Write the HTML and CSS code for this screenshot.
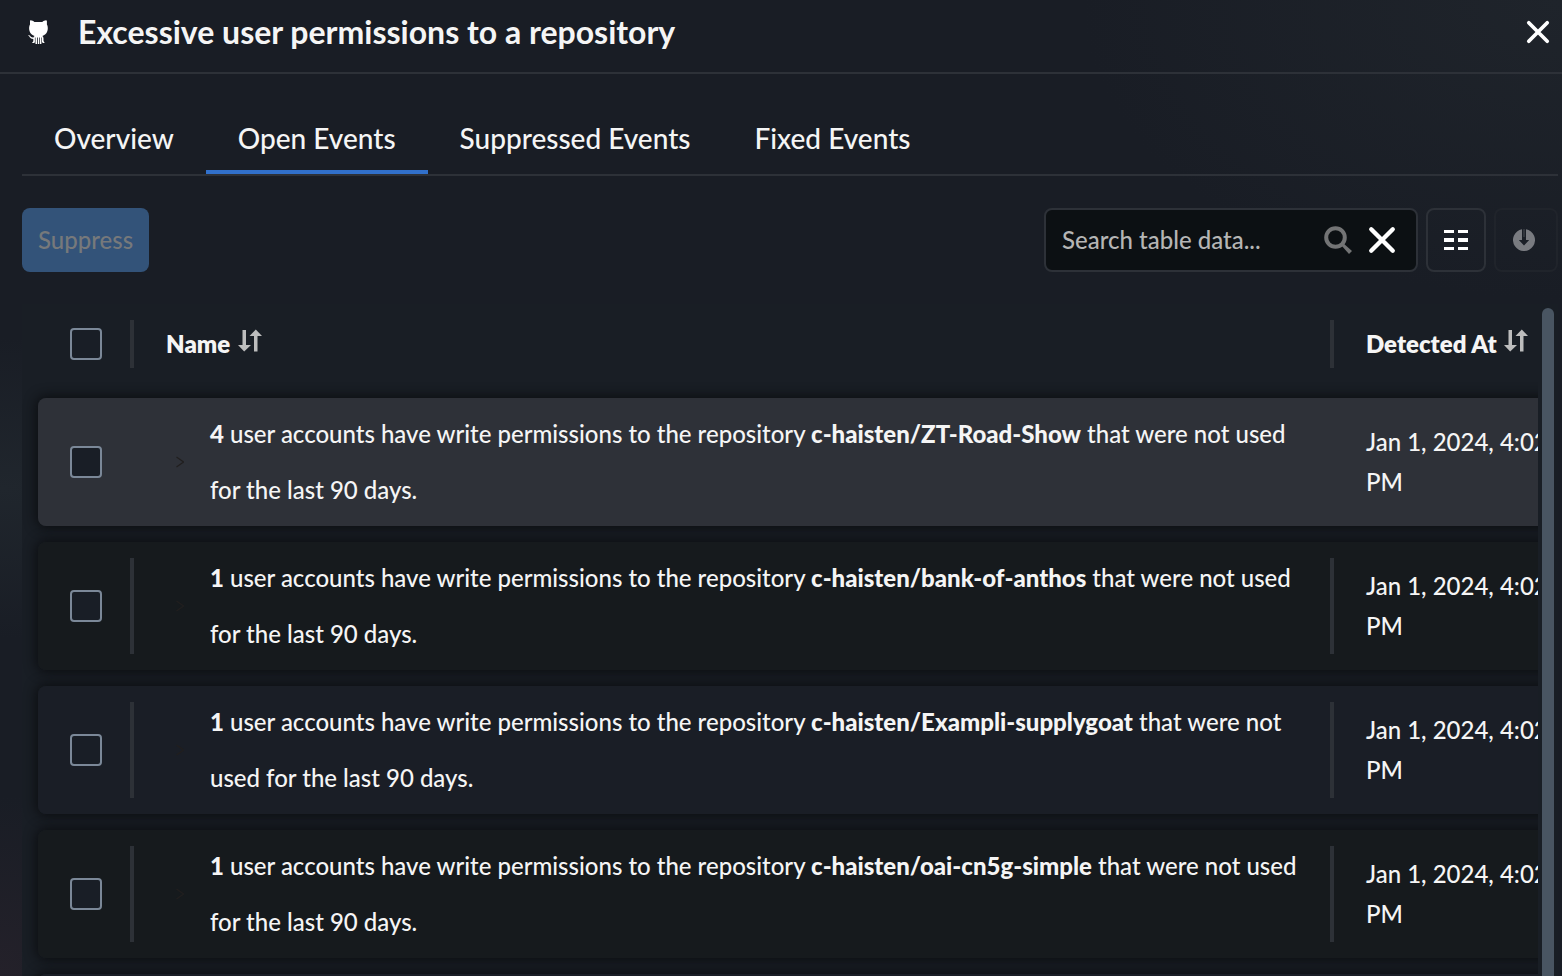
FILE: index.html
```
<!DOCTYPE html>
<html lang="en">
<head>
<meta charset="utf-8">
<title>Excessive user permissions to a repository</title>
<link rel="stylesheet" href="styles.css">
</head>
<body>
<svg class="defs" aria-hidden="true">
  <symbol id="sort" viewBox="0 0 24 24"><path d="M4.500 1h3.500v15h5L6.200 22.500 0 16h4.500zM16 22.500h3.500V7H24L17.800 .5 11.500 7H16z"/></symbol>
  <symbol id="chevron" viewBox="0 0 8 12"><path d="M.5 1l7 5-7 5" fill="none" stroke="currentColor" stroke-width="1.200"/></symbol>
  <symbol id="cross" viewBox="0 0 26 26"><path d="M3 3l20 20M23 3L3 23" fill="none" stroke="currentColor" stroke-width="4" stroke-linecap="round"/></symbol>
</svg>
<header class="header">
  <svg class="logo" viewBox="0 0 20 24" aria-hidden="true">
    <path d="M2.600.3Q2 .3 2 1v3.500C1 6 .8 9 1.600 11.300c.8 2.500 2.700 4 5 4.600-.7.500-1 1-1.100 1.600-2 .2-2.600-.5-3.300-1.400C1.600 15.200.8 14.800 0 15c1.500.8 1.500 3.800 5.300 4v2.200L4 23h2.300l.6-1V17.500h.6V24h1.500v-6.500h.8V24h1.500v-6.500h.7V24h1.400v-6.500h.6V22l.9 1h1.800l-1.200-2v-2.600c0-1-.4-2-1.200-2.500 2.300-.6 4.200-2 5-4.600.8-2.400.6-5.300-.4-6.800V1Q18.800.3 18 .3c-1.200 0-2.800.9-3.700 1.700H6.400C5.500 1.200 3.800.3 2.600.3z" fill="currentColor"/>
  </svg>
  <h1 class="title">Excessive user permissions to a repository</h1>
  <button class="icon-button close" aria-label="Close"><svg class="close-icon"><use href="#cross"/></svg></button>
</header>
<main class="content">
  <nav class="tabs">
    <a class="tab" href="#">Overview</a>
    <a class="tab selected" href="#" aria-current="page">Open Events</a>
    <a class="tab" href="#">Suppressed Events</a>
    <a class="tab" href="#">Fixed Events</a>
  </nav>
  <div class="toolbar">
    <button class="suppress" disabled>Suppress</button>
    <div class="search">
      <input class="search-input" type="text" placeholder="Search table data..." aria-label="Search table data">
      <svg class="search-icon" viewBox="0 0 28 28" aria-hidden="true"><circle cx="11.500" cy="11.500" r="9.300" fill="none" stroke="currentColor" stroke-width="4"/><path d="M19 17l9 8-3 3-8-9z" fill="currentColor"/></svg>
      <button class="icon-button" aria-label="Clear search"><svg class="clear-icon"><use href="#cross"/></svg></button>
    </div>
    <button class="tool" aria-label="Columns"><svg class="columns-icon" viewBox="0 0 24 22"><path d="M0 1h10v3H0zM14 1h10v3H14zM0 9h10v4H0zM14 9h10v4H14zM0 18h10v3H0zM14 18h10v3H14z" fill="currentColor"/></svg></button>
    <button class="tool download" aria-label="Download" disabled><svg class="download-icon" viewBox="0 0 22 22"><path d="M9 .2A11 11 0 1 0 13 .2V11h3.200L11 16.500 5.800 11H9z" fill="currentColor"/><path d="M10.500 0h1v8h-1z" fill="currentColor" opacity=".5"/></svg></button>
  </div>
  <section class="panel">
    <div class="viewport">
      <table class="events">
        <colgroup><col class="col-check"><col><col class="col-date"></colgroup>
        <thead>
          <tr>
            <th><div class="cell check-cell"><input class="check" type="checkbox" aria-label="Select all"><i class="divider"></i></div></th>
            <th><div class="cell"><span class="label">Name <svg class="sort"><use href="#sort"/></svg></span><i class="divider"></i></div></th>
            <th><div class="cell"><span class="label">Detected At <svg class="sort"><use href="#sort"/></svg></span></div></th>
          </tr>
        </thead>
        <tbody>
          <tr class="active">
            <td><div class="cell check-cell"><input class="check" type="checkbox" aria-label="Select ZT-Road-Show"><i class="divider"></i></div></td>
            <td><div class="cell"><svg class="chevron"><use href="#chevron"/></svg><p class="message"><strong>4</strong> user accounts have write permissions to the repository <strong>c-haisten/ZT-Road-Show</strong> that were not used for the last 90 days.</p><i class="divider"></i></div></td>
            <td><div class="cell date">Jan 1, 2024, 4:02 PM</div></td>
          </tr>
          <tr>
            <td><div class="cell check-cell"><input class="check" type="checkbox" aria-label="Select bank-of-anthos"><i class="divider"></i></div></td>
            <td><div class="cell"><svg class="chevron"><use href="#chevron"/></svg><p class="message"><strong>1</strong> user accounts have write permissions to the repository <strong>c-haisten/bank-of-anthos</strong> that were not used for the last 90 days.</p><i class="divider"></i></div></td>
            <td><div class="cell date">Jan 1, 2024, 4:02 PM</div></td>
          </tr>
          <tr>
            <td><div class="cell check-cell"><input class="check" type="checkbox" aria-label="Select Exampli-supplygoat"><i class="divider"></i></div></td>
            <td><div class="cell"><svg class="chevron"><use href="#chevron"/></svg><p class="message"><strong>1</strong> user accounts have write permissions to the repository <strong>c-haisten/Exampli-supplygoat</strong> that were not used for the last 90 days.</p><i class="divider"></i></div></td>
            <td><div class="cell date">Jan 1, 2024, 4:02 PM</div></td>
          </tr>
          <tr>
            <td><div class="cell check-cell"><input class="check" type="checkbox" aria-label="Select oai-cn5g-simple"><i class="divider"></i></div></td>
            <td><div class="cell"><svg class="chevron"><use href="#chevron"/></svg><p class="message"><strong>1</strong> user accounts have write permissions to the repository <strong>c-haisten/oai-cn5g-simple</strong> that were not used for the last 90 days.</p><i class="divider"></i></div></td>
            <td><div class="cell date">Jan 1, 2024, 4:02 PM</div></td>
          </tr>
          <tr>
            <td><div class="cell"></div></td>
            <td></td>
            <td></td>
          </tr>
        </tbody>
      </table>
    </div>
    <div class="scrollbar"></div>
  </section>
</main>
</body>
</html>
```
FILE: styles.css
```
* {
  box-sizing: border-box;
}

body {
  display: flex;
  flex-direction: column;
  height: 100vh;
  margin: 0;
  overflow: hidden;
  background:
    radial-gradient(circle at 0 100%, #24212a, transparent 180px),
    radial-gradient(ellipse at 0 50%, #20262d, transparent 480px),
    radial-gradient(ellipse at 100% 0, #1f242b, transparent 480px),
    #191d25;
  color: #f5f5f5;
  font: 500 24px/40px Lato, sans-serif;
}

button,
input {
  margin: 0;
  font: inherit;
}

.defs {
  display: none;
}

.header {
  display: flex;
  flex: none;
  align-items: center;
  height: 74px;
  padding: 0 12px 8px 28px;
  border-bottom: 2px solid #2d3138;
}

.logo {
  width: 20px;
  height: 24px;
  margin-right: 30px;
  color: #fff;
}

.title {
  flex: 1;
  margin: 0;
  font-size: 32px;
  font-weight: 700;
}

.icon-button {
  display: flex;
  padding: 0;
  border: 0;
  background: none;
  color: #fff;
}

.close-icon {
  width: 24px;
  height: 24px;
}

.content {
  display: flex;
  flex: 1;
  flex-direction: column;
  min-height: 0;
  padding: 32px 4px 0 22px;
}

.tabs {
  display: flex;
  flex: none;
  height: 70px;
  border-bottom: 2px solid #2d3138;
}

.tab {
  padding: 12px 32px 0;
  border-bottom: 4px solid transparent;
  color: inherit;
  font-size: 28px;
  text-decoration: none;
}

.selected {
  border-color: #3170cb;
}

.toolbar {
  display: flex;
  flex: none;
  gap: 8px;
  height: 64px;
  margin: 32px 0;
}

.suppress {
  margin-right: auto;
  padding: 0 16px;
  border: 0;
  border-radius: 8px;
  background: #335379;
  color: #77797b;
}

.search {
  display: flex;
  align-items: center;
  width: 374px;
  padding: 0 20px 0 16px;
  border: 2px solid #2d3138;
  border-radius: 8px;
  background: #0c1013;
}

.search-input {
  flex: 1;
  min-width: 0;
  padding: 0;
  border: 0;
  outline: 0;
  background: none;
  color: inherit;
}

.search-input::placeholder {
  color: #b5b5b5;
  opacity: 1;
}

.search-icon {
  width: 28px;
  height: 28px;
  margin-right: 16px;
  color: #737475;
}

.clear-icon {
  width: 28px;
  height: 28px;
}

.tool {
  display: flex;
  align-items: center;
  justify-content: center;
  width: 60px;
  padding: 0;
  border: 2px solid #2d3138;
  border-radius: 8px;
  background: none;
  color: #fff;
}

.download {
  width: 64px;
  padding-right: 4px;
  border-color: #20242b;
  color: #797b80;
}

.columns-icon {
  width: 24px;
  height: 22px;
}

.download-icon {
  width: 22px;
  height: 22px;
}

.panel {
  display: flex;
  flex: 1;
  min-height: 0;
  background: #191e25;
}

.viewport {
  flex: 1;
  min-width: 0;
  padding-left: 16px;
  overflow: hidden;
}

.events {
  width: calc(100% + 34px);
  border-spacing: 0 16px;
  table-layout: fixed;
}

.col-check {
  width: 96px;
}

.col-date {
  width: 238px;
}

.events th,
.events td {
  padding: 0;
  text-align: left;
}

.events th {
  padding-bottom: 14px;
}

.cell {
  display: flex;
  align-items: center;
  height: 128px;
}

.events th .cell {
  height: 48px;
}

.check-cell {
  padding-left: 32px;
}

.check {
  width: 32px;
  height: 32px;
  border: 2px solid #7b8898;
  border-radius: 4px;
  background: #191e26;
  appearance: none;
}

.divider {
  width: 4px;
  height: 96px;
  margin-left: auto;
  background: #2d3137;
}

.events th .divider {
  height: 48px;
}

.label {
  padding-left: 32px;
  font-weight: 800;
  white-space: nowrap;
}

.sort {
  width: 24px;
  height: 24px;
  margin-left: 2px;
  fill: #bdbdbd;
}

.events tbody tr {
  border-radius: 8px;
  box-shadow: 0 0 12px 2px #0c0e11;
}

.events tbody td {
  background: #161a1d;
}

.events tbody tr:nth-child(odd) td {
  background: #1a1e26;
}

.events tbody tr.active td {
  background: #2e3138;
}

.events tbody td:first-child {
  border-radius: 8px 0 0 8px;
}

.active .divider {
  visibility: hidden;
}

.chevron {
  width: 8px;
  height: 12px;
  margin: 0 26px 0 42px;
  color: #211f1f;
}

.message {
  flex: 1;
  margin: 0;
  padding-right: 32px;
  line-height: 56px;
}

.message strong {
  font-weight: 900;
}

.date {
  padding: 0 16px 0 32px;
}

.scrollbar {
  width: 12px;
  margin: 4px 4px 0;
  border-radius: 6px 6px 0 0;
  background: #495562;
}
```
